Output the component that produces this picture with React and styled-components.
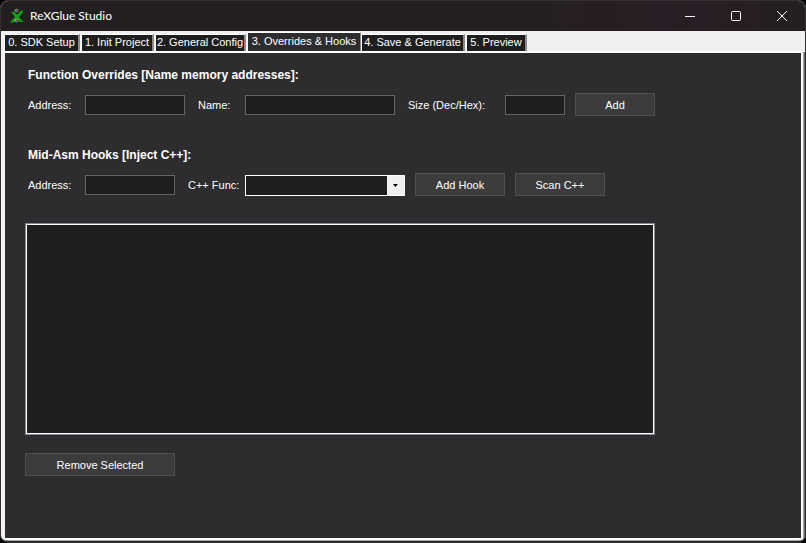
import React, { useState } from 'react'
import styled, { createGlobalStyle } from 'styled-components'

const tabs = [
  { name: '0. SDK Setup', width: 76 },
  { name: '1. Init Project', width: 73 },
  { name: '2. General Config', width: 91 },
  { name: '3. Overrides & Hooks', width: 114 },
  { name: '4. Save & Generate', width: 104 },
  { name: '5. Preview', width: 61 },
]

const Logo = () => (
  <svg width="14" height="16" viewBox="0 0 14 16" aria-hidden="true">
    <path d="M1 4l3 0 3 3 3-3 3-2-1 3-3 4 1 2 4 3-4 0-3-3-3 3-4 1 2-3 3-3-2-3z" fill="#0f9a0f" />
    <path d="M3 4l8 9M12 3l-9 11" stroke="#12a812" strokeWidth="2" />
    <circle cx="6.500" cy="2.500" r="1.300" fill="#333" stroke="#aaa" />
    <circle cx="6.500" cy="12.500" r="1.300" fill="#333" stroke="#aaa" />
  </svg>
)

const App = () => {
  const [active, setActive] = useState(3)

  return (
    <Window>
      <Global />
      <TitleBar>
        <Logo />
        <Title>ReXGlue Studio</Title>
        <WinButton aria-label="Minimize">
          <svg width="10" height="10" viewBox="0 0 10 10"><path d="M0 5.500h10" stroke="#fff" /></svg>
        </WinButton>
        <WinButton aria-label="Maximize">
          <svg width="10" height="10" viewBox="0 0 10 10">
            <rect x="0.500" y="0.500" width="9" height="9" rx="1" fill="none" stroke="#fff" />
          </svg>
        </WinButton>
        <WinButton aria-label="Close">
          <svg width="10" height="10" viewBox="0 0 10 10"><path d="M0 0l10 10M10 0L0 10" stroke="#fff" /></svg>
        </WinButton>
      </TitleBar>

      <TabStrip role="tablist">
        {tabs.map((tab, i) => (
          <Tab
            key={tab.name}
            role="tab"
            aria-selected={i === active}
            $active={i === active}
            $width={tab.width}
            onClick={() => setActive(i)}
          >
            {tab.name}
          </Tab>
        ))}
      </TabStrip>

      <Page role="tabpanel">
        <Heading>Function Overrides [Name memory addresses]:</Heading>
        <Row>
          <FirstLabel htmlFor="fnAddress">Address:</FirstLabel>
          <TextBox id="fnAddress" $width={100} />
          <Label htmlFor="fnName" $width={60}>Name:</Label>
          <TextBox id="fnName" $width={150} />
          <Label htmlFor="fnSize" $width={110}>Size (Dec/Hex):</Label>
          <TextBox id="fnSize" $width={60} />
          <Button $width={80}>Add</Button>
        </Row>

        <Heading>Mid-Asm Hooks [Inject C++]:</Heading>
        <Row>
          <FirstLabel htmlFor="hookAddress">Address:</FirstLabel>
          <TextBox id="hookAddress" $width={90} />
          <Label htmlFor="hookFunc" $width={70}>C++ Func:</Label>
          <Combo>
            <select id="hookFunc" />
            <Arrow>
              <svg width="5" height="3" viewBox="0 0 5 3"><path d="M0 0h5L2.500 3z" fill="#000" /></svg>
            </Arrow>
          </Combo>
          <Button $width={90}>Add Hook</Button>
          <Button $width={90}>Scan C++</Button>
        </Row>

        <HookList size="10" aria-label="Hooks" />
        <RemoveButton $width={150}>Remove Selected</RemoveButton>
      </Page>
    </Window>
  )
}

export default App

const Global = createGlobalStyle`
* {
  box-sizing: border-box;
}
body {
  margin: 0;
  background: #000;
}
button, input, select {
  font: inherit;
  color: inherit;
  margin: 0;
}
`

const Window = styled.div`
display: flex;
flex-direction: column;
min-height: 100vh;
border: 1px solid #333032;
border-bottom: 2px solid #2c2a2b;
border-radius: 8px;
overflow: hidden;
background: #f0f0f0;
color: #fff;
font-family: "Liberation Sans", Arial, sans-serif;
font-size: 11px;
line-height: 16px;
`

const TitleBar = styled.div`
display: flex;
align-items: center;
height: 30px;
padding-left: 9px;
background: linear-gradient(90deg, #231f21 0%, #231f21 60%, #291d24 85%, #231f21 100%);
`

const Title = styled.div`
flex: 1;
padding-left: 6px;
font-family: Lato, "Open Sans", sans-serif;
font-size: 12px;
`

const WinButton = styled.button`
display: flex;
align-items: center;
justify-content: center;
width: 46px;
height: 30px;
padding: 0;
border: none;
background: none;
`

const TabStrip = styled.div`
display: flex;
align-items: flex-end;
gap: 1px;
height: 20px;
padding-left: 3px;
`

const Tab = styled.button`
width: ${(p) => p.$width}px;
height: ${(p) => (p.$active ? 19 : 17)}px;
margin-right: ${(p) => (p.$active ? -1 : 0)}px;
padding: 0 0 2px;
border: 1px solid #fff;
border-right: ${(p) => (p.$active ? 1 : 2)}px solid #8a8a8a;
border-bottom: none;
background: ${(p) => (p.$active ? '#2d2d30' : '#1e1e1e')};
line-height: 14px;
white-space: nowrap;
`

const Page = styled.div`
flex: 1;
display: flex;
flex-direction: column;
align-items: flex-start;
margin: 0 2px 1px 0;
padding: 14px 20px;
border: 2px solid #fff;
border-left: 4px solid #f5f0f1;
box-shadow: 1px 1px 0 #a0a0a0, 2px 1px 0 #696969;
background: #2d2d30;
`

const Heading = styled.h2`
margin: 0 0 10px;
padding-left: 3px;
font-size: 12px;
font-weight: 700;
`

const Row = styled.div`
display: flex;
align-items: center;
height: 23px;
margin-bottom: 31px;

&:nth-of-type(2) {
  margin-bottom: 27px;
}
`

const Label = styled.label`
width: ${(p) => p.$width}px;
padding-left: 13px;
`

const FirstLabel = styled.label`
width: 60px;
padding-left: 3px;
`

const TextBox = styled.input`
width: ${(p) => p.$width}px;
height: 20px;
padding: 0 3px;
border: 1px solid #646464;
background: #1e1e1e;
`

const Button = styled.button`
width: ${(p) => p.$width}px;
height: 23px;
margin-left: 10px;
padding: 0;
border: 1px solid #505050;
background: #3c3c3c;
`

const RemoveButton = styled(Button)`
margin: 18px 0 0;
`

const Combo = styled.div`
position: relative;
align-self: flex-end;
width: 160px;
height: 21px;

select {
  display: block;
  width: 100%;
  height: 100%;
  padding: 0 20px 0 3px;
  appearance: none;
  border: 1px solid #fff;
  border-radius: 0;
  background: #1e1e1e;
}
`

const Arrow = styled.span`
position: absolute;
top: 1px;
right: 1px;
bottom: 1px;
display: flex;
align-items: center;
justify-content: center;
width: 17px;
background: #f0f0f0;
pointer-events: none;
`

const HookList = styled.select`
width: 630px;
max-width: 100%;
height: 212px;
padding: 0;
border: 1px solid #828790;
border-radius: 0;
box-shadow: inset 0 0 0 1px #fff;
background: #1e1e1e;
`
